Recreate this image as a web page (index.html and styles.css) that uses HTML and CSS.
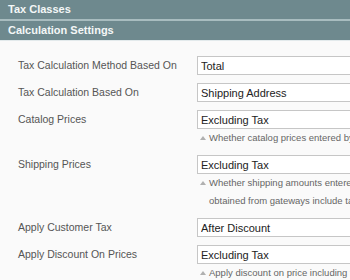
FILE: index.html
```html
<!DOCTYPE html>
<html lang="en">
<head>
    <meta charset="UTF-8">
    <meta name="viewport" content="width=device-width, initial-scale=1.0">
    <title>Tax Configuration</title>
    <link rel="stylesheet" href="styles.css">
</head>
<body>
    <div class="section-head">Tax Classes</div>
    <div class="section-head">Calculation Settings</div>
    <div class="fieldset">
        <div class="row">
            <label class="row-label">Tax Calculation Method Based On</label>
            <div class="row-value">
                <select class="field"><option>Total</option></select>
            </div>
        </div>
        <div class="row">
            <label class="row-label">Tax Calculation Based On</label>
            <div class="row-value">
                <select class="field"><option>Shipping Address</option></select>
            </div>
        </div>
        <div class="row">
            <label class="row-label">Catalog Prices</label>
            <div class="row-value">
                <select class="field"><option>Excluding Tax</option></select>
                <p class="note">Whether catalog prices entered by admin include tax.</p>
            </div>
        </div>
        <div class="row">
            <label class="row-label">Shipping Prices</label>
            <div class="row-value">
                <select class="field"><option>Excluding Tax</option></select>
                <p class="note">Whether shipping amounts entered by admin or<br>obtained from gateways include tax.</p>
            </div>
        </div>
        <div class="row">
            <label class="row-label">Apply Customer Tax</label>
            <div class="row-value">
                <select class="field"><option>After Discount</option></select>
            </div>
        </div>
        <div class="row">
            <label class="row-label">Apply Discount On Prices</label>
            <div class="row-value">
                <select class="field"><option>Excluding Tax</option></select>
                <p class="note">Apply discount on price including tax is calculated based on store tax.</p>
            </div>
        </div>
    </div>
</body>
</html>
```
FILE: styles.css
```css
body {
    margin: 0;
    width: 350px;
    height: 280px;
    overflow: hidden;
    font-family: "Liberation Sans", Arial, sans-serif;
    background-color: #fafafa;
}
.section-head {
    height: 19px;
    line-height: 19px;
    padding-left: 8px;
    background-color: #6e898e;
    color: #f4f7f7;
    font-size: 11px;
    font-weight: bold;
    border-bottom: 2px solid #a8bcbf;
    white-space: nowrap;
}
.section-head + .section-head {
    border-bottom: 1px solid #e3eaec;
}
.fieldset {
    padding: 15px 0 0 18px;
    white-space: nowrap;
}
.row {
    display: flex;
    padding-bottom: 8px;
}
.row-label {
    width: 179px;
    flex-shrink: 0;
    line-height: 19px;
    font-size: 10.5px;
    color: #555;
}
.row-value {
    width: 290px;
    flex-shrink: 0;
}
.field {
    -webkit-appearance: none;
    appearance: none;
    display: block;
    width: 280px;
    height: 19px;
    padding: 0 3px;
    margin: 0;
    border: 1px solid #c6c6c6;
    border-radius: 0;
    background-color: #fff;
    font-family: "Liberation Sans", Arial, sans-serif;
    font-size: 11px;
    color: #222;
}
.note {
    margin: 0;
    padding-left: 12px;
    position: relative;
    line-height: 18px;
    font-size: 9.5px;
    color: #666;
    overflow: hidden;
}
.note::before {
    content: "";
    position: absolute;
    left: 3px;
    top: 7px;
    border-left: 3px solid transparent;
    border-right: 3px solid transparent;
    border-bottom: 4px solid #b0b0b0;
}
```
